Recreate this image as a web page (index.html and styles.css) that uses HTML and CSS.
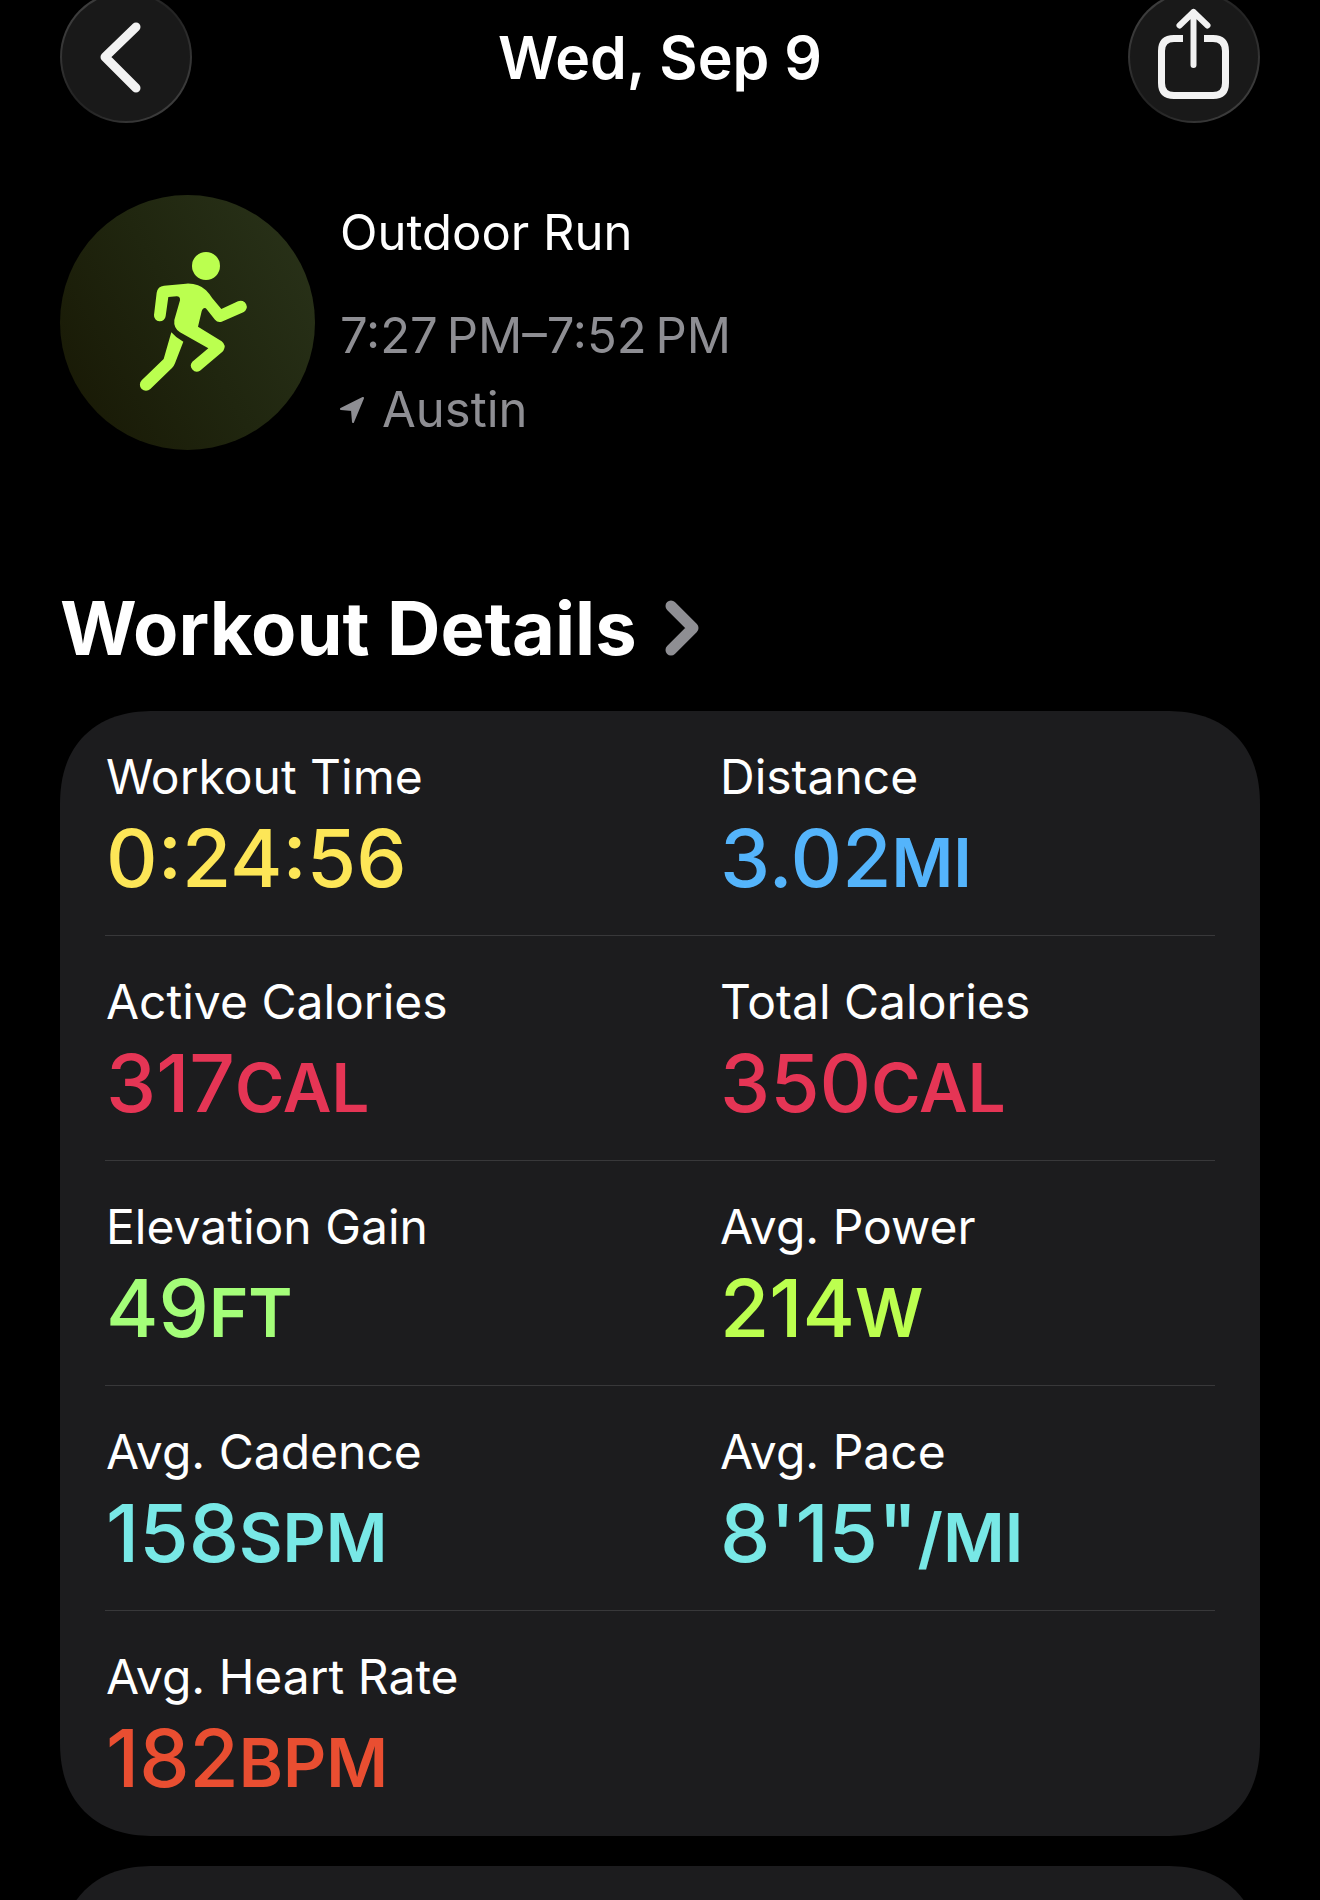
FILE: index.html
```html
<!DOCTYPE html>
<html lang="en">
<head>
    <meta charset="UTF-8">
    <meta name="viewport" content="width=device-width, initial-scale=1.0">
    <title>Outdoor Run</title>
    <link rel="stylesheet" href="styles.css">
</head>
<body>
    <header class="topbar">
        <button type="button" class="round-button" aria-label="Back">
            <svg viewBox="0 0 132 132" fill="none" stroke="#f2f2f2" stroke-width="9" stroke-linecap="round" stroke-linejoin="round">
                <path d="M76 36L45 66L76 97"/>
            </svg>
        </button>
        <h1>Wed, Sep 9</h1>
        <button type="button" class="round-button" aria-label="Share">
            <svg viewBox="0 0 132 132" fill="none" stroke="#f2f2f2" stroke-width="7" stroke-linejoin="round">
                <path d="M55 47.500H46Q33.500 47.500 33.500 60V92Q33.500 104.500 46 104.500H85Q97.500 104.500 97.500 92V60Q97.500 47.500 85 47.500H76"/>
                <path d="M65.500 74V21M51.500 34.500L65.500 21L79.500 34.500" stroke-width="6" stroke-linecap="round"/>
            </svg>
        </button>
    </header>

    <main>
        <section class="summary">
            <div class="activity-icon">
                <svg viewBox="30 45 765 765" fill="#bbff4f">
                    <circle cx="468" cy="258" r="42"/>
                    <path d="M342 317L408 311Q445 309 468 331Q478 341 487 355L514 387L564 364A18 18 0 0 1 580 397L515 425Q503 429 495 419L470 388Q466 381 459 386Q456 389 455 394L444 440L515 484Q530 496 520 512Q517 516 512 520L450 572A18 18 0 0 1 427 545L475 505L390 457Q370 444 373 420L390 361Q391 349 380 349L355 351L347 408A17 17 0 0 1 312 405L320 338Q323 319 342 317Z"/>
                    <path d="M364 457Q378 474 400 485L375 550Q372 558 366 564L301 627A18 18 0 0 1 275 601L341 537Z"/>
                </svg>
            </div>
            <div class="summary-text">
                <h2>Outdoor Run</h2>
                <p>7:27&thinsp;PM–7:52&thinsp;PM</p>
                <p class="place">
                    <svg class="location" viewBox="0 0 24 26" fill="#8e8e93" stroke="#8e8e93" stroke-width="2" stroke-linejoin="round">
                        <path d="M1 12L23 1L13 25L12 13Z"/>
                    </svg>
                    Austin
                </p>
            </div>
        </section>

        <h2 class="section-title">
            <a href="#details">Workout Details
                <svg viewBox="0 0 34 56" fill="none" stroke="#8e8e93" stroke-width="11" stroke-linecap="round" stroke-linejoin="round">
                    <path d="M6 6L28 28L6 50"/>
                </svg>
            </a>
        </h2>

        <dl class="card" id="details">
            <div class="row">
                <div class="metric yellow"><dt>Workout Time</dt><dd>0:24:56</dd></div>
                <div class="metric blue"><dt>Distance</dt><dd>3.02<span class="unit">MI</span></dd></div>
            </div>
            <div class="row">
                <div class="metric red"><dt>Active Calories</dt><dd>317<span class="unit">CAL</span></dd></div>
                <div class="metric red"><dt>Total Calories</dt><dd>350<span class="unit">CAL</span></dd></div>
            </div>
            <div class="row">
                <div class="metric green"><dt>Elevation Gain</dt><dd>49<span class="unit">FT</span></dd></div>
                <div class="metric lime"><dt>Avg. Power</dt><dd>214<span class="unit">W</span></dd></div>
            </div>
            <div class="row">
                <div class="metric cyan"><dt>Avg. Cadence</dt><dd>158<span class="unit">SPM</span></dd></div>
                <div class="metric cyan"><dt>Avg. Pace</dt><dd>8'15"<span class="unit">/MI</span></dd></div>
            </div>
            <div class="row">
                <div class="metric orange"><dt>Avg. Heart Rate</dt><dd>182<span class="unit">BPM</span></dd></div>
            </div>
        </dl>

        <div class="card next-card"></div>
    </main>
</body>
</html>
```
FILE: styles.css
```css
* {
    box-sizing: border-box;
    margin: 0;
    padding: 0;
}

body {
    height: 100vh;
    overflow-y: auto;
    display: flex;
    flex-direction: column;
    padding: 0 60px;
    background-color: #000;
    color: #fff;
    font-family: Inter, 'Liberation Sans', sans-serif;
    font-size: 49px;
    scrollbar-width: none;
}

main {
    flex: 1;
    display: flex;
    flex-direction: column;
}

svg {
    display: block;
}

/* Top bar */
.topbar {
    display: flex;
    justify-content: space-between;
    align-items: center;
    margin-top: -9px;
}

.topbar h1 {
    font-size: 59px;
    font-weight: 600;
}

.round-button {
    width: 132px;
    height: 132px;
    border: 2px solid transparent;
    border-radius: 50%;
    background: linear-gradient(#191919, #191919) padding-box,
        linear-gradient(135deg, #484848, #242424 45%, #242424 55%, #484848) border-box;
    cursor: pointer;
}

.round-button svg {
    width: 132px;
    height: 132px;
    margin: -2px;
}

/* Workout summary */
.summary {
    display: flex;
    gap: 25px;
    margin-top: 72px;
}

.activity-icon {
    width: 255px;
    height: 255px;
    border-radius: 50%;
    background: linear-gradient(60deg, #191a06 10%, #20260f 50%, #293219 95%);
}

.summary-text {
    padding-top: 1px;
    line-height: 74px;
    color: #8e8e93;
}

.summary-text h2 {
    margin-bottom: 29px;
    font-size: 49px;
    font-weight: 400;
    color: #fff;
}

.place {
    display: flex;
    align-items: center;
    gap: 18px;
}

.location {
    width: 24px;
    height: 26px;
}

/* Details */
.section-title {
    margin-top: 128px;
    font-size: 74px;
    line-height: 100px;
}

.section-title a {
    display: inline-flex;
    align-items: center;
    gap: 28px;
    color: #fff;
    text-decoration: none;
}

.section-title svg {
    width: 34px;
    height: 56px;
}

.card {
    margin-top: 33px;
    padding: 0 45px;
    border-radius: 84px;
    background-color: #1c1c1e;
}

/* smoother corners where the browser has them */
@supports (corner-shape: superellipse(1.2)) {
    .card {
        border-radius: 94px;
        corner-shape: superellipse(1.2);
    }
}

.row {
    display: grid;
    grid-template-columns: 1fr 1fr;
    gap: 120px;
    padding: 36px 1px 27px;
    border-bottom: 1px solid #38383a;
}

.row:last-child {
    border-bottom-color: transparent;
}

.metric dt {
    font-size: 48px;
    line-height: 60px;
}

.metric dd {
    margin-top: 1px;
    font-size: 80px;
    font-weight: 500;
    line-height: 100px;
}

.unit {
    font-size: 67px;
    font-weight: 600;
    line-height: 1;
}

.yellow dd { color: #fde657; }
.blue dd { color: #54b4fb; }
.red dd { color: #e53555; }
.green dd { color: #a4fe79; }
.lime dd { color: #bcff4f; }
.cyan dd { color: #78e8e6; }
.orange dd { color: #e94e31; }

.next-card {
    flex: 1 0 auto;
    min-height: 225px;
    margin-top: 30px;
}
```
